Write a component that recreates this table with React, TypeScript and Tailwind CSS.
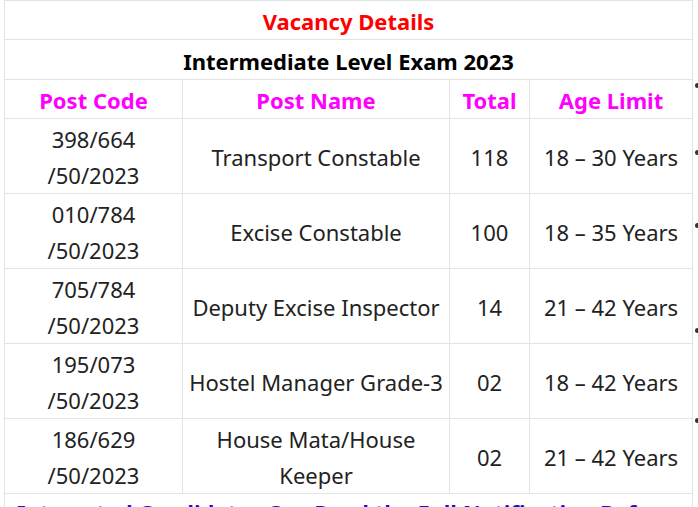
import React from "react";

const rows = [
  ["398/664", "/50/2023", ["Transport Constable"], "118", "18 – 30 Years"],
  ["010/784", "/50/2023", ["Excise Constable"], "100", "18 – 35 Years"],
  ["705/784", "/50/2023", ["Deputy Excise Inspector"], "14", "21 – 42 Years"],
  ["195/073", "/50/2023", ["Hostel Manager Grade-3"], "02", "18 – 42 Years"],
  ["186/629", "/50/2023", ["House Mata/House", "Keeper"], "02", "21 – 42 Years"],
] as const;

export default function App() {
  const bullets = [83, 150, 223, 328, 418];
  return (
    <div
      className="relative w-[698px] h-[507px] overflow-hidden bg-white text-[#222]"
      style={{ fontFamily: '"Noto Sans", "Open Sans", sans-serif' }}
    >
      {bullets.map((y) => (
        <div
          key={y}
          className="absolute left-[695px] w-[5px] h-[5px] rounded-full bg-[#333]"
          style={{ top: y }}
        />
      ))}
      <table className="ml-[4px] w-[688px] border-collapse table-fixed">
        <colgroup>
          <col className="w-[178px]" />
          <col className="w-[267px]" />
          <col className="w-[80px]" />
          <col className="w-[163px]" />
        </colgroup>
        <tbody>
          <tr className="h-[39px]">
            <td colSpan={4} className="border border-[#e3e3e3] pt-[2px] text-center font-bold text-[22px] text-[#ff0000] leading-[34px]">
              Vacancy Details
            </td>
          </tr>
          <tr className="h-[40px]">
            <td colSpan={4} className="border border-[#e3e3e3] pt-[2px] text-center font-bold text-[22px] text-black leading-[34px]">
              Intermediate Level Exam 2023
            </td>
          </tr>
          <tr className="h-[39px]">
            {["Post Code", "Post Name", "Total", "Age Limit"].map((h) => (
              <td key={h} className="border border-[#e3e3e3] pt-[2px] text-center font-bold text-[22px] text-[#ff00ff] leading-[34px]">
                {h}
              </td>
            ))}
          </tr>
          {rows.map((r) => (
            <tr key={r[0]} className="h-[75px]">
              <td className="border border-[#e3e3e3] pt-[2px] text-center text-[22px] leading-[36px]">
                <div>{r[0]}</div>
                <div>{r[1]}</div>
              </td>
              <td className="border border-[#e3e3e3] pt-[2px] text-center text-[22px] leading-[36px]">
                {r[2].map((l) => (
                  <div key={l}>{l}</div>
                ))}
              </td>
              <td className="border border-[#e3e3e3] pt-[2px] text-center text-[22px] leading-[36px]">{r[3]}</td>
              <td className="border border-[#e3e3e3] pt-[2px] text-center text-[22px] leading-[36px]">{r[4]}</td>
            </tr>
          ))}
          <tr className="h-[34px]">
            <td colSpan={4} className="border border-[#e3e3e3] px-[12px] pt-[3px] align-top font-bold text-[22px] text-[#1515cc] leading-[30px] whitespace-nowrap overflow-hidden">
              Interested Candidates Can Read the Full Notification Before
            </td>
          </tr>
        </tbody>
      </table>
    </div>
  );
}
